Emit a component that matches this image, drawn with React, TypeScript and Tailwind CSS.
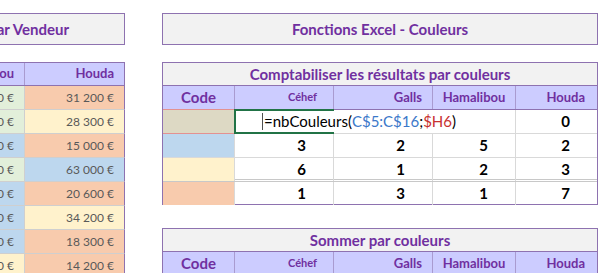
const GREEN = "bg-[#e2efda]";
const BLUE = "bg-[#bdd7ee]";
const YELLOW = "bg-[#fff2cc]";
const ORANGE = "bg-[#f8cbad]";

const leftRows = [
  { h: "24 500 €", hc: GREEN, o: "31 200 €", oc: ORANGE },
  { h: "21 300 €", hc: GREEN, o: "28 300 €", oc: YELLOW },
  { h: "44 100 €", hc: BLUE, o: "15 000 €", oc: ORANGE },
  { h: "17 600 €", hc: GREEN, o: "63 000 €", oc: BLUE },
  { h: "52 200 €", hc: BLUE, o: "20 600 €", oc: ORANGE },
  { h: "38 400 €", hc: BLUE, o: "34 200 €", oc: YELLOW },
  { h: "26 900 €", hc: BLUE, o: "18 300 €", oc: ORANGE },
  { h: "19 500 €", hc: YELLOW, o: "14 200 €", oc: ORANGE },
];

const counts = [
  { bg: BLUE, v: ["3", "2", "5", "2"] },
  { bg: YELLOW, v: ["6", "1", "2", "3"] },
  { bg: ORANGE, v: ["1", "3", "1", "7"] },
];

function TitleBox({ children, className = "" }: { children: React.ReactNode; className?: string }) {
  return (
    <div
      className={`h-[32px] border border-[#8e72b0] bg-[#f2f2f2] flex items-center text-[15px] font-bold text-[#7030a0] whitespace-nowrap ${className}`}
    >
      {children}
    </div>
  );
}

function HeaderRow() {
  return (
    <div className="grid grid-cols-[72px_99px_99px_83px_81px] h-[24px] bg-[#ccccff] border-b border-[#8e72b0] font-bold text-[#7030a0]">
      <div className="flex items-center justify-center text-[15px] border-r border-[#a99bd0]">Code</div>
      <div className="flex items-center justify-end pr-[16px] text-[11px] border-r border-[#a99bd0]">Céhef</div>
      <div className="flex items-center justify-end pr-[10px] text-[13px] border-r border-[#a99bd0]">Galls</div>
      <div className="flex items-center justify-center text-[13px] border-r border-[#a99bd0]">Hamalibou</div>
      <div className="flex items-center justify-end pr-[12px] text-[13px]">Houda</div>
    </div>
  );
}

function NumberRow({ bg, v, last, double }: { bg: string; v: string[]; last?: boolean; double?: boolean }) {
  const rowBorder = last ? "h-[22px]" : double ? "h-[24px] border-b-[3px] border-double border-[#c8c8c8]" : "h-[24px] border-b border-[#d9d9d9]";
  return (
    <div className={`grid grid-cols-[72px_99px_99px_83px_81px] text-[15px] font-bold text-black ${rowBorder}`}>
      <div className={`${bg} border-r border-[#d9d9d9]`} />
      {v.map((n, i) => (
        <div
          key={i}
          className={`flex items-center justify-end pr-[27px] ${i < 3 ? "border-r border-[#d9d9d9]" : ""}`}
        >
          {n}
        </div>
      ))}
    </div>
  );
}

// tableau de gauche, coupé par le bord de la fenêtre
function LeftPanel() {
  return (
    <div className="shrink-0 w-[190px] ml-[-65px]">
      <TitleBox className="justify-end pr-[55px]">par Vendeur</TitleBox>
      <div className="mt-[17px] border-t border-[#8e72b0]">
        <div className="grid grid-cols-[90px_100px] h-[23px] bg-[#ccccff] border-b border-[#8e72b0] text-[13px] font-bold text-[#7030a0]">
          <div className="flex items-center justify-end pr-[10px] border-r border-[#a99bd0]">Hamalibou</div>
          <div className="flex items-center justify-end pr-[10px] border-r border-[#8e72b0]">Houda</div>
        </div>
        {leftRows.map((r, i) => (
          <div key={i} className="grid grid-cols-[90px_100px] h-[24px] text-[12px] text-[#595959]">
            <div className={`${r.hc} flex items-center justify-end pr-[10px] border-r border-b border-[#cfcfcf]`}>{r.h}</div>
            <div className={`${r.oc} flex items-center justify-end pr-[10px] border-r border-b border-[#cfcfcf] [border-right-color:#8e72b0]`}>{r.o}</div>
          </div>
        ))}
      </div>
    </div>
  );
}

function CountTable() {
  return (
    <div className="mt-[17px] border border-[#8e72b0]">
      <div className="h-[23px] bg-[#f2f2f2] border-b border-[#8e72b0] flex items-center justify-center text-[15px] font-bold text-[#7030a0]">
        Comptabiliser les résultats par couleurs
      </div>
      <HeaderRow />
      {/* ligne en cours d'édition */}
      <div className="grid grid-cols-[72px_99px_99px_83px_81px] h-[24px] border-b border-[#d9d9d9] text-[15px] text-black">
        <div className="relative bg-[#ddd9c4] border-r border-[#d9d9d9]">
          <span className="absolute inset-x-0 -top-px bottom-[-1px] border-y border-[#e39191]" />
        </div>
        <div className="relative">
          <span className="absolute left-[-1px] right-0 -top-px bottom-[-1px] border-2 border-r-0 border-[#217346]" />
          <span className="absolute left-[27px] top-[3px] bottom-[3px] z-10 flex items-center whitespace-nowrap border-l border-[#505050] pl-px">
            =nbCouleurs(<span className="text-[#3b78c9]">C$5:C$16</span>;<span className="text-[#c8312f]">$H6</span>)
          </span>
        </div>
        <div />
        <div className="border-r border-[#d9d9d9]" />
        <div className="flex items-center justify-end pr-[27px] font-bold">0</div>
      </div>
      <NumberRow bg={counts[0].bg} v={counts[0].v} />
      <NumberRow bg={counts[1].bg} v={counts[1].v} double />
      <NumberRow bg={counts[2].bg} v={counts[2].v} last />
    </div>
  );
}

function SumTable() {
  return (
    <div className="mt-[23px] border border-[#8e72b0]">
      <div className="h-[23px] bg-[#f2f2f2] border-b border-[#8e72b0] flex items-center justify-center text-[15px] font-bold text-[#7030a0]">
        Sommer par couleurs
      </div>
      <HeaderRow />
    </div>
  );
}

export default function App() {
  return (
    <div className="w-[600px] h-[273px] overflow-hidden bg-white flex items-start pt-[13px] [font-family:Lato,sans-serif]">
      <LeftPanel />
      <div className="shrink-0 w-[436px] ml-[37px]">
        <TitleBox className="justify-center">Fonctions Excel - Couleurs</TitleBox>
        <CountTable />
        <SumTable />
      </div>
    </div>
  );
}
